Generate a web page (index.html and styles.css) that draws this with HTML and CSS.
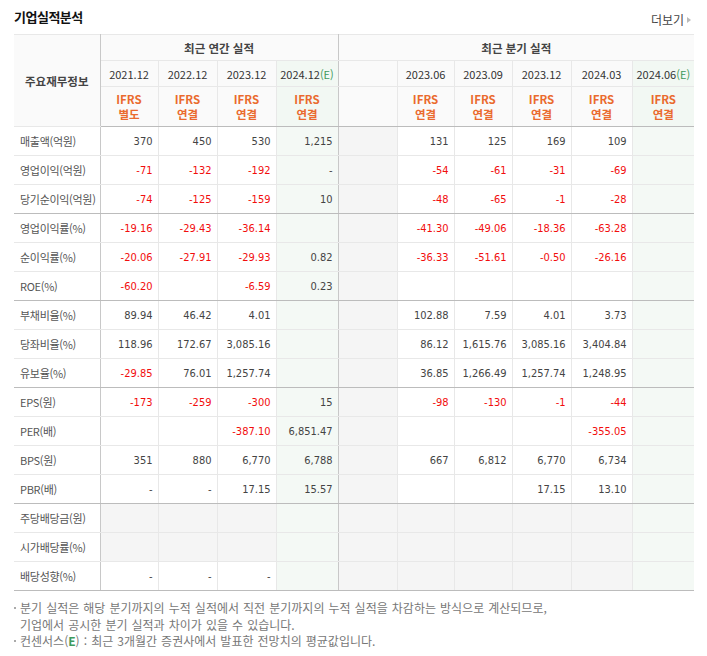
FILE: index.html
```html
<!DOCTYPE html>
<html lang="ko">
<head>
<meta charset="utf-8">
<title>기업실적분석</title>
<link rel="stylesheet" href="styles.css">
</head>
<body>
<div class="wrap">
  <div class="head">
    <h2 class="title">기업실적분석</h2>
    <a class="more" href="#">더보기<span class="tri"></span></a>
  </div>
  <table class="fin">
    <colgroup>
      <col style="width:86px"><col style="width:58px"><col style="width:59px"><col style="width:59px"><col style="width:62px">
      <col style="width:59px"><col style="width:57px"><col style="width:58px"><col style="width:59px"><col style="width:61px"><col style="width:62px">
    </colgroup>
    <thead>
      <tr class="h1">
        <th rowspan="3" class="lbl-h">주요재무정보</th>
        <th colspan="4" class="sep">최근 연간 실적</th>
        <th colspan="6">최근 분기 실적</th>
      </tr>
      <tr class="h2">
        <th>2021.12</th><th>2022.12</th><th>2023.12</th><th class="e sep">2024.12<em>(E)</em></th>
        <th></th><th>2023.06</th><th>2023.09</th><th>2023.12</th><th>2024.03</th><th class="e">2024.06<em>(E)</em></th>
      </tr>
      <tr class="h3">
        <th>IFRS<br>별도</th><th>IFRS<br>연결</th><th>IFRS<br>연결</th><th class="e sep">IFRS<br>연결</th>
        <th></th><th>IFRS<br>연결</th><th>IFRS<br>연결</th><th>IFRS<br>연결</th><th>IFRS<br>연결</th><th class="e">IFRS<br>연결</th>
      </tr>
    </thead>
    <tbody>
      <tr><th>매출액(억원)</th><td>370</td><td>450</td><td>530</td><td class="e sep">1,215</td><td class="g"></td><td>131</td><td>125</td><td>169</td><td>109</td><td class="e"></td></tr>
      <tr><th>영업이익(억원)</th><td class="r">-71</td><td class="r">-132</td><td class="r">-192</td><td class="e sep">-</td><td class="g"></td><td class="r">-54</td><td class="r">-61</td><td class="r">-31</td><td class="r">-69</td><td class="e"></td></tr>
      <tr class="grp"><th>당기순이익(억원)</th><td class="r">-74</td><td class="r">-125</td><td class="r">-159</td><td class="e sep">10</td><td class="g"></td><td class="r">-48</td><td class="r">-65</td><td class="r">-1</td><td class="r">-28</td><td class="e"></td></tr>
      <tr><th>영업이익률(%)</th><td class="r">-19.16</td><td class="r">-29.43</td><td class="r">-36.14</td><td class="e sep"></td><td class="g"></td><td class="r">-41.30</td><td class="r">-49.06</td><td class="r">-18.36</td><td class="r">-63.28</td><td class="e"></td></tr>
      <tr><th>순이익률(%)</th><td class="r">-20.06</td><td class="r">-27.91</td><td class="r">-29.93</td><td class="e sep">0.82</td><td class="g"></td><td class="r">-36.33</td><td class="r">-51.61</td><td class="r">-0.50</td><td class="r">-26.16</td><td class="e"></td></tr>
      <tr class="grp"><th>ROE(%)</th><td class="r">-60.20</td><td></td><td class="r">-6.59</td><td class="e sep">0.23</td><td class="g"></td><td></td><td></td><td></td><td></td><td class="e"></td></tr>
      <tr><th>부채비율(%)</th><td>89.94</td><td>46.42</td><td>4.01</td><td class="e sep"></td><td class="g"></td><td>102.88</td><td>7.59</td><td>4.01</td><td>3.73</td><td class="e"></td></tr>
      <tr><th>당좌비율(%)</th><td>118.96</td><td>172.67</td><td>3,085.16</td><td class="e sep"></td><td class="g"></td><td>86.12</td><td>1,615.76</td><td>3,085.16</td><td>3,404.84</td><td class="e"></td></tr>
      <tr class="grp"><th>유보율(%)</th><td class="r">-29.85</td><td>76.01</td><td>1,257.74</td><td class="e sep"></td><td class="g"></td><td>36.85</td><td>1,266.49</td><td>1,257.74</td><td>1,248.95</td><td class="e"></td></tr>
      <tr><th>EPS(원)</th><td class="r">-173</td><td class="r">-259</td><td class="r">-300</td><td class="e sep">15</td><td class="g"></td><td class="r">-98</td><td class="r">-130</td><td class="r">-1</td><td class="r">-44</td><td class="e"></td></tr>
      <tr><th>PER(배)</th><td></td><td></td><td class="r">-387.10</td><td class="e sep">6,851.47</td><td class="g"></td><td></td><td></td><td></td><td class="r">-355.05</td><td class="e"></td></tr>
      <tr><th>BPS(원)</th><td>351</td><td>880</td><td>6,770</td><td class="e sep">6,788</td><td class="g"></td><td>667</td><td>6,812</td><td>6,770</td><td>6,734</td><td class="e"></td></tr>
      <tr class="grp"><th>PBR(배)</th><td>-</td><td>-</td><td>17.15</td><td class="e sep">15.57</td><td class="g"></td><td></td><td></td><td>17.15</td><td>13.10</td><td class="e"></td></tr>
      <tr><th>주당배당금(원)</th><td class="g"></td><td class="g"></td><td class="g"></td><td class="e sep"></td><td class="g"></td><td class="g"></td><td class="g"></td><td class="g"></td><td class="g"></td><td class="e"></td></tr>
      <tr><th>시가배당률(%)</th><td class="g"></td><td class="g"></td><td class="g"></td><td class="e sep"></td><td class="g"></td><td class="g"></td><td class="g"></td><td class="g"></td><td class="g"></td><td class="e"></td></tr>
      <tr class="grp"><th>배당성향(%)</th><td>-</td><td>-</td><td>-</td><td class="e sep"></td><td class="g"></td><td class="g"></td><td class="g"></td><td class="g"></td><td class="g"></td><td class="e"></td></tr>
    </tbody>
  </table>
  <ul class="notes">
    <li>분기 실적은 해당 분기까지의 누적 실적에서 직전 분기까지의 누적 실적을 차감하는 방식으로 계산되므로,<br>기업에서 공시한 분기 실적과 차이가 있을 수 있습니다.</li>
    <li>컨센서스(<b>E</b>) : 최근 3개월간 증권사에서 발표한 전망치의 평균값입니다.</li>
  </ul>
</div>
</body>
</html>
```

FILE: styles.css
```css
html, body {
  margin: 0;
  padding: 0;
  background: #fff;
}
body {
  font-family: "Noto Sans CJK KR", "DejaVu Sans", sans-serif;
  color: #333;
}
.wrap {
  width: 680px;
  padding: 0 13px 0 14px;
}
.head {
  display: flex;
  justify-content: space-between;
  align-items: flex-end;
  height: 34px;
}
.title {
  margin: 0 0 8px 0;
  font-size: 13px;
  font-weight: bold;
  color: #111;
  letter-spacing: -0.5px;
  line-height: 18px;
}
.more {
  font-size: 12px;
  color: #444;
  text-decoration: none;
  margin: 0 3px 6px 0;
  line-height: 16px;
  display: flex;
  align-items: center;
}
.tri {
  display: inline-block;
  width: 0;
  height: 0;
  margin-left: 3px;
  border-left: 4px solid #bbb;
  border-top: 3px solid transparent;
  border-bottom: 3px solid transparent;
}
.fin {
  width: 680px;
  table-layout: fixed;
  border-collapse: collapse;
  border-top: 1px solid #bcbcbc;
  border-bottom: 1px solid #bcbcbc;
}
.fin th, .fin td {
  padding: 0;
  border: 1px solid #e8e8e8;
  border-left-color: #eaeaea;
}
.fin tr > :first-child {
  border-left: none;
}
.fin tr > :last-child {
  border-right: none;
}
.fin thead th {
  background: #fafafa;
  font-weight: normal;
  text-align: center;
  font-size: 11px;
  color: #333;
}
.fin thead th.lbl-h {
  color: #555;
  font-size: 11px;
  border-right: 1px solid #c8c8c8;
}
.fin thead tr.h1 th {
  height: 25px;
  font-weight: bold;
  color: #444;
  font-size: 11.5px;
}
.fin thead tr.h2 th {
  height: 25px;
  font-size: 11px;
  color: #333;
}
.fin thead tr.h2 em {
  font-style: normal;
  color: #3e9a5c;
}
.fin thead tr.h3 th {
  height: 39px;
  color: #ea6a2e;
  font-weight: bold;
  font-size: 11.5px;
  line-height: 15px;
  border-bottom: 1px solid #bcbcbc;
}
.fin thead th.e {
  background: #f2f8f3;
}
.fin .sep {
  border-right: 1px solid #c8c8c8;
}
.fin tbody th {
  height: 28px;
  text-align: left;
  padding-left: 6px;
  font-weight: normal;
  font-size: 11px;
  color: #555;
  background: #fff;
  border-right: 1px solid #c8c8c8;
  white-space: nowrap;
  letter-spacing: -0.3px;
}
.fin tbody td {
  text-align: right;
  padding-right: 5px;
  font-family: "DejaVu Sans", sans-serif;
  font-stretch: condensed;
  font-size: 11px;
  color: #444;
  background: #fff;
  white-space: nowrap;
}
.fin tbody td.r {
  color: #f20d0d;
}
.fin tbody td.g {
  background: #f5f5f5;
}
.fin tbody td.e {
  background: #f4f9f5;
}
.fin tbody tr.grp th, .fin tbody tr.grp td {
  border-bottom: 1px solid #bcbcbc;
}
.notes {
  list-style: none;
  margin: 9px 0 0 0;
  padding: 0;
  font-size: 12px;
  color: #777;
  line-height: 16.5px;
  word-spacing: 0.7px;
}
.notes li {
  position: relative;
  padding-left: 6px;
}
.notes li::before {
  content: "";
  position: absolute;
  left: 0;
  top: 7px;
  width: 2px;
  height: 2px;
  background: #aaa;
}
.notes b {
  font-weight: bold;
  color: #3e9a5c;
}
```
